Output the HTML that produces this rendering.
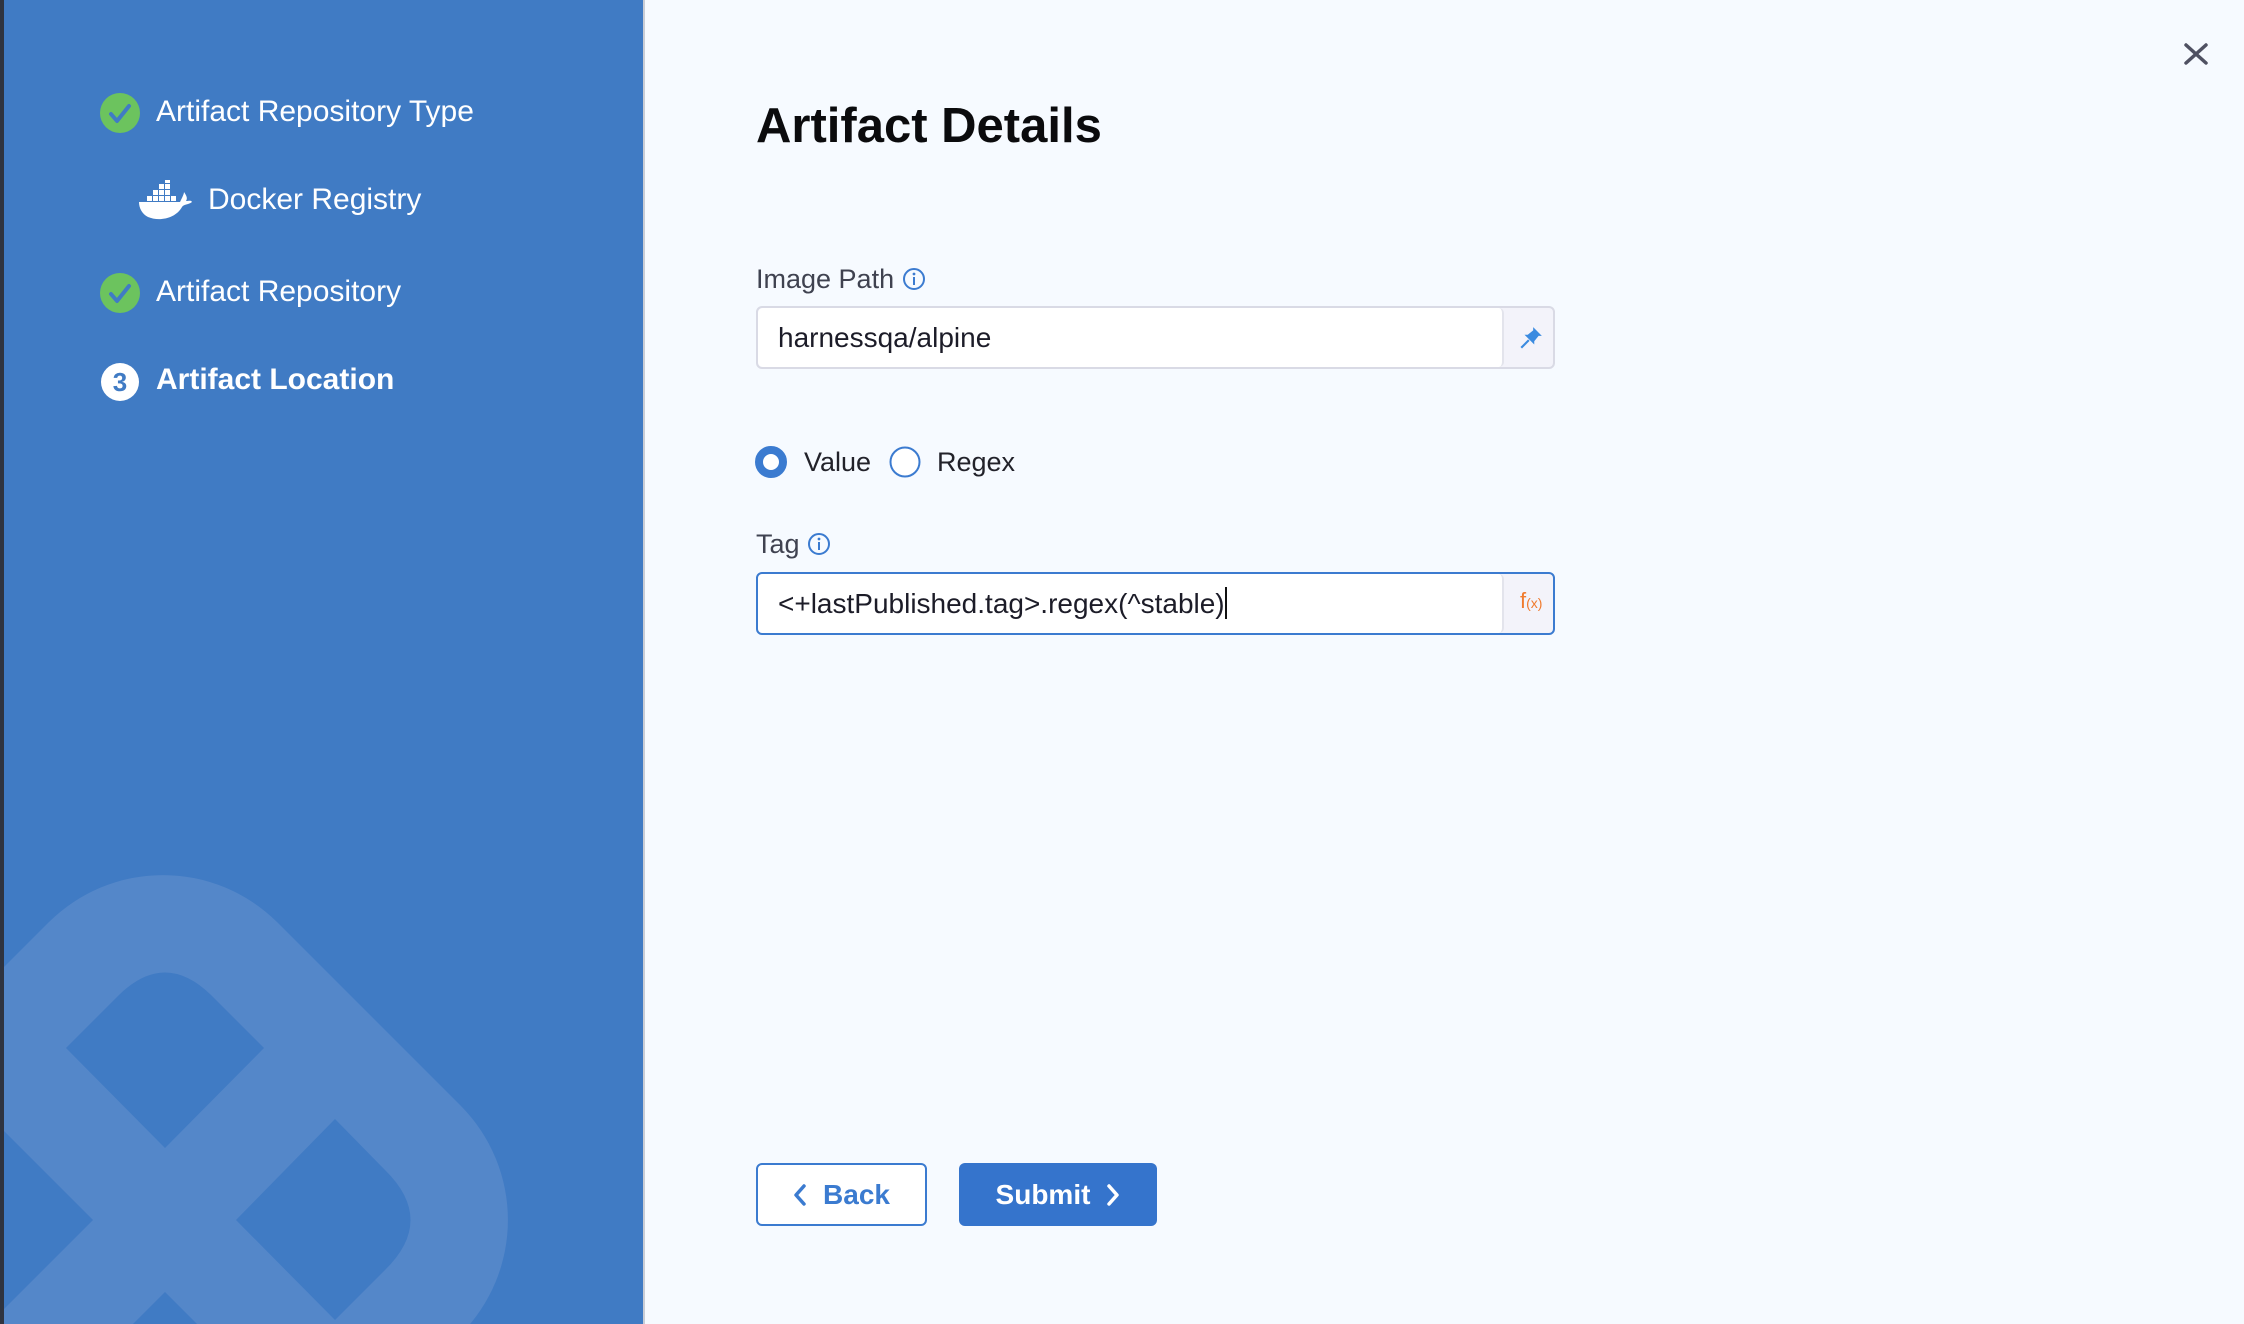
<!DOCTYPE html>
<html><head><meta charset="utf-8"><style>
*{box-sizing:border-box;margin:0;padding:0}
html,body{width:2244px;height:1324px;overflow:hidden;background:#f6faff;font-family:"Liberation Sans",sans-serif}
#left{position:absolute;left:0;top:0;width:643px;height:1324px;background:#407bc4;overflow:hidden;border-left:4px solid #2f3440}
#divider{position:absolute;left:643px;top:0;width:2px;height:1324px;background:#c9cdd6}
.chk{position:absolute;width:40px;height:40px;border-radius:50%;background:#6cc35e}
.num{position:absolute;width:38px;height:38px;border-radius:50%;background:#fff;color:#407bc4;font-weight:bold;font-size:26px;text-align:center;line-height:38px}
.t{position:absolute;font-size:30px;color:#fff;white-space:nowrap}
h1{position:absolute;left:756px;top:98px;font-size:49px;font-weight:bold;color:#0b0b0d}
.lbl{position:absolute;font-size:27px;color:#3f4250}
.inp{position:absolute;left:756px;width:799px;height:63px;border:2px solid #d9dae5;border-radius:6px;background:#f3f3fa}
.inp .f{position:absolute;left:0;top:0;bottom:0;width:746px;background:#fff;border-radius:5px;border-right:2px solid #e3e4ec;font-size:28px;color:#1c1c28;padding-left:20px;line-height:59px}
.btn{position:absolute;top:1163px;height:63px;border-radius:6px;font-size:28px;font-weight:bold;display:flex;align-items:center;justify-content:center;gap:16px}
</style></head><body>
<div id="left">
<svg width="643" height="1324" style="position:absolute;left:-4px;top:0">
<path d="M0,971 L49,922 A162 162 0 0 1 277,922 L461,1106 A162 162 0 0 1 461,1334 L0,1334 Z" fill="#5487c9"/>
<g fill="#407bc4">
<path d="M66,1048 L119,995 Q165,950 211,995 L264,1048 L165,1148 Z"/>
<path d="M335,1119 L385,1170 Q436,1220 385,1270 L335,1320 L236,1220 Z"/>
<path d="M93,1220 L0,1127 L0,1313 Z"/>
<path d="M165,1292 L133,1324 L197,1324 Z"/>
</g></svg>
<div class="chk" style="left:96px;top:93px"><svg width="40" height="40"><path d="M11 21 L17 28 L29 13" stroke="#407bc4" stroke-width="4" fill="none" stroke-linecap="round" stroke-linejoin="round"/></svg></div>
<div class="t" style="left:152px;top:95px">Artifact Repository Type</div>
<svg style="position:absolute;left:134px;top:180px" width="56" height="42" viewBox="0 0 56 42">
<g fill="#fff"><rect x="15" y="10" width="5" height="5"/><rect x="21" y="10" width="5" height="5"/><rect x="27" y="10" width="5" height="5"/><rect x="21" y="4" width="5" height="5"/><rect x="27" y="4" width="5" height="5"/><rect x="27" y="-2" width="5" height="5"/><rect x="9" y="16" width="5" height="5"/><rect x="15" y="16" width="5" height="5"/><rect x="21" y="16" width="5" height="5"/><rect x="27" y="16" width="5" height="5"/><rect x="33" y="16" width="5" height="5"/>
<path d="M1 22 H42 C44 18 46 14 46 12 C48 15 50 18 48 21 C51 21 53 20 54 22 C50 25 46 24 44 27 C38 38 22 42 10 37 C4 34 1 28 1 22Z"/></g></svg>
<div class="t" style="left:204px;top:183px">Docker Registry</div>
<div class="chk" style="left:96px;top:273px"><svg width="40" height="40"><path d="M11 21 L17 28 L29 13" stroke="#407bc4" stroke-width="4" fill="none" stroke-linecap="round" stroke-linejoin="round"/></svg></div>
<div class="t" style="left:152px;top:275px">Artifact Repository</div>
<div class="num" style="left:97px;top:363px">3</div>
<div class="t" style="left:152px;top:363px;font-weight:bold">Artifact Location</div>
</div>
<div id="divider"></div>
<svg style="position:absolute;left:2184px;top:43px" width="24" height="22"><path d="M2 2 L22 20 M22 2 L2 20" stroke="#4f5162" stroke-width="3.5" stroke-linecap="round"/></svg>
<h1>Artifact Details</h1>
<div class="lbl" style="left:756px;top:264px">Image Path <svg width="24" height="24" style="vertical-align:-3px"><circle cx="12" cy="12" r="10" fill="none" stroke="#3b7bd0" stroke-width="2"/><rect x="11" y="10" width="2" height="8" fill="#3b7bd0"/><circle cx="12" cy="7" r="1.4" fill="#3b7bd0"/></svg></div>
<div class="inp" style="top:306px"><div class="f">harnessqa/alpine</div>
<svg style="position:absolute;left:760px;top:17px" width="26" height="26" viewBox="0 0 24 24"><path d="M14 2 L22 10 L19 10 L15 15 L15 18 L6 9 L9 9 L14 5Z" fill="#3b8be0"/><path d="M10 14 L3 21" stroke="#3b8be0" stroke-width="2"/></svg></div>
<svg style="position:absolute;left:755px;top:446px" width="34" height="34"><circle cx="16" cy="16" r="12" fill="#fff" stroke="#3b7bd0" stroke-width="8"/></svg>
<div class="lbl" style="left:804px;top:447px;color:#22222a">Value</div>
<svg style="position:absolute;left:889px;top:446px" width="34" height="34"><circle cx="16" cy="16" r="14.5" fill="#fff" stroke="#3b7bd0" stroke-width="2"/></svg>
<div class="lbl" style="left:937px;top:447px;color:#22222a">Regex</div>
<div class="lbl" style="left:756px;top:529px">Tag <svg width="24" height="24" style="vertical-align:-3px"><circle cx="12" cy="12" r="10" fill="none" stroke="#3b7bd0" stroke-width="2"/><rect x="11" y="10" width="2" height="8" fill="#3b7bd0"/><circle cx="12" cy="7" r="1.4" fill="#3b7bd0"/></svg></div>
<div class="inp" style="top:572px;border-color:#3b7bd0"><div class="f">&lt;+lastPublished.tag&gt;.regex(^stable)<span style="display:inline-block;width:2px;height:32px;background:#111;vertical-align:-6px"></span></div>
<div style="position:absolute;left:762px;top:14px;color:#f07b2e;font-size:22px">f<span style="font-size:14px">(x)</span></div></div>
<div class="btn" style="left:756px;width:171px;border:2px solid #3b7bd0;background:#fff;color:#3b7bd0"><svg width="14" height="22"><path d="M11 2 L3 11 L11 20" stroke="#3b7bd0" stroke-width="3.5" fill="none" stroke-linecap="round" stroke-linejoin="round"/></svg>Back</div>
<div class="btn" style="left:959px;width:198px;background:#3574cc;color:#fff">Submit<svg width="14" height="22"><path d="M3 2 L11 11 L3 20" stroke="#fff" stroke-width="3.5" fill="none" stroke-linecap="round" stroke-linejoin="round"/></svg></div>
</body></html>
